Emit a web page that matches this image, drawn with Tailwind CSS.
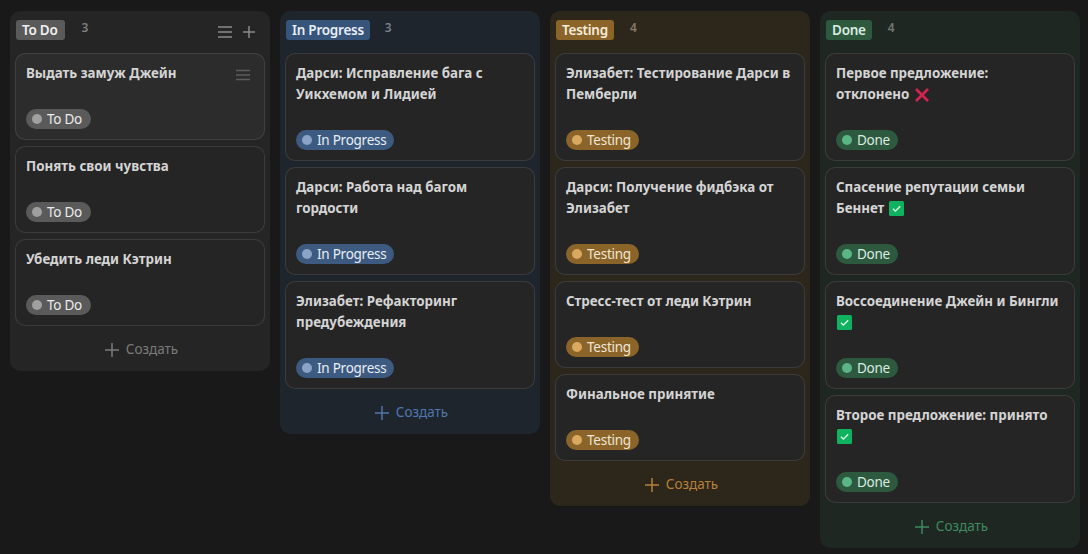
<!DOCTYPE html>
<html><head><meta charset="utf-8"><script src="https://cdn.jsdelivr.net/npm/@tailwindcss/browser@4"></script></head>
<body class="bg-[#191919] h-[554px] overflow-hidden font-['Noto_Sans','Open_Sans',sans-serif] text-[14px]">
<div class="flex items-start gap-[10px] pl-[10px] pt-[11px]">

<section class="w-[260px] rounded-[10px] bg-[#252525] px-[5px] pt-[9px]">
  <header class="flex items-start h-[33px]">
    <span class="ml-px h-5 pl-[6px] pr-[7px] rounded-[3px] bg-[#5a5a5a] text-[#f0f0f0] text-[13.5px] tracking-[-0.25px] leading-5 font-semibold">To Do</span>
    <span class="ml-[17px] -mt-[2px] text-[12px] font-semibold text-[#7f7f7f] leading-5">3</span>
    <svg class="ml-auto mt-[5px]" width="14" height="14" viewBox="0 0 14 14" fill="none" stroke="#8a8a8a" stroke-width="1.5"><path d="M0 2h14M0 7h14M0 12h14"/></svg>
    <svg class="ml-[11px] mt-[6px] mr-[10px]" width="12" height="12" viewBox="0 0 12 12" fill="none" stroke="#8a8a8a" stroke-width="1.5"><path d="M6 0v12M0 6h12"/></svg>
  </header>
  <div class="flex flex-col gap-[6px]">
    <article class="relative h-[87px] rounded-[10px] border border-white/10 bg-[#2c2c2c] px-[10px] pt-[9px]">
      <h3 class="font-bold text-[13.35px] leading-[21px] text-[#d4d4d4]">Выдать замуж Джейн</h3>
      <svg class="absolute right-[14px] top-[14px]" width="14" height="14" viewBox="0 0 14 14" fill="none" stroke="#5c5c5c" stroke-width="1.3"><path d="M0 2.5h14M0 7h14M0 11.5h14"/></svg>
      <span class="absolute left-[10px] bottom-[10px] flex items-center h-5 rounded-full bg-[#5a5a5a] pl-[6px] pr-[9px] text-[#ececec] text-[13.5px] tracking-[-0.25px] leading-5"><i class="w-[10px] h-[10px] rounded-full bg-[#a0a0a0] mr-[5px]"></i>To Do</span>
    </article>
    <article class="relative h-[87px] rounded-[10px] border border-white/10 bg-[#252525] px-[10px] pt-[9px]">
      <h3 class="font-bold text-[13.35px] leading-[21px] text-[#d4d4d4]">Понять свои чувства</h3>
      <span class="absolute left-[10px] bottom-[10px] flex items-center h-5 rounded-full bg-[#5a5a5a] pl-[6px] pr-[9px] text-[#ececec] text-[13.5px] tracking-[-0.25px] leading-5"><i class="w-[10px] h-[10px] rounded-full bg-[#a0a0a0] mr-[5px]"></i>To Do</span>
    </article>
    <article class="relative h-[87px] rounded-[10px] border border-white/10 bg-[#252525] px-[10px] pt-[9px]">
      <h3 class="font-bold text-[13.35px] leading-[21px] text-[#d4d4d4]">Убедить леди Кэтрин</h3>
      <span class="absolute left-[10px] bottom-[10px] flex items-center h-5 rounded-full bg-[#5a5a5a] pl-[6px] pr-[9px] text-[#ececec] text-[13.5px] tracking-[-0.25px] leading-5"><i class="w-[10px] h-[10px] rounded-full bg-[#a0a0a0] mr-[5px]"></i>To Do</span>
    </article>
  </div>
  <div class="flex items-center justify-center h-[45px] pl-[3px] pt-[2px] text-[#7b7b7b] text-[13.5px]">
    <svg class="mr-[7px]" width="14" height="14" viewBox="0 0 14 14" fill="none" stroke="currentColor" stroke-width="1.5"><path d="M7 0v14M0 7h14"/></svg>Создать
  </div>
</section>

<section class="w-[260px] rounded-[10px] bg-[#1e252d] px-[5px] pt-[9px]">
  <header class="flex items-start h-[33px]">
    <span class="ml-px h-5 px-[6px] rounded-[3px] bg-[#37547a] text-[#e8eef6] text-[13.5px] tracking-[-0.25px] leading-5 font-semibold">In Progress</span>
    <span class="ml-[15px] -mt-[2px] text-[12px] font-semibold text-[#7a7f86] leading-5">3</span>
  </header>
  <div class="flex flex-col gap-[6px]">
    <article class="relative h-[108px] rounded-[10px] border border-white/10 bg-[#252525] px-[10px] pt-[9px]">
      <h3 class="font-bold text-[13.35px] leading-[21px] text-[#d4d4d4]">Дарси: Исправление бага с Уикхемом и Лидией</h3>
      <span class="absolute left-[10px] bottom-[10px] flex items-center h-5 rounded-full bg-[#3d5a80] pl-[6px] pr-[8px] text-[#e8eef6] text-[13.5px] tracking-[-0.25px] leading-5"><i class="w-[10px] h-[10px] rounded-full bg-[#8aa3c7] mr-[5px]"></i>In Progress</span>
    </article>
    <article class="relative h-[108px] rounded-[10px] border border-white/10 bg-[#252525] px-[10px] pt-[9px]">
      <h3 class="font-bold text-[13.35px] leading-[21px] text-[#d4d4d4]">Дарси: Работа над багом гордости</h3>
      <span class="absolute left-[10px] bottom-[10px] flex items-center h-5 rounded-full bg-[#3d5a80] pl-[6px] pr-[8px] text-[#e8eef6] text-[13.5px] tracking-[-0.25px] leading-5"><i class="w-[10px] h-[10px] rounded-full bg-[#8aa3c7] mr-[5px]"></i>In Progress</span>
    </article>
    <article class="relative h-[108px] rounded-[10px] border border-white/10 bg-[#252525] px-[10px] pt-[9px]">
      <h3 class="font-bold text-[13.35px] leading-[21px] text-[#d4d4d4]">Элизабет: Рефакторинг предубеждения</h3>
      <span class="absolute left-[10px] bottom-[10px] flex items-center h-5 rounded-full bg-[#3d5a80] pl-[6px] pr-[8px] text-[#e8eef6] text-[13.5px] tracking-[-0.25px] leading-5"><i class="w-[10px] h-[10px] rounded-full bg-[#8aa3c7] mr-[5px]"></i>In Progress</span>
    </article>
  </div>
  <div class="flex items-center justify-center h-[45px] pl-[3px] pt-[2px] text-[#4f77ad] text-[13.5px]">
    <svg class="mr-[7px]" width="14" height="14" viewBox="0 0 14 14" fill="none" stroke="currentColor" stroke-width="1.5"><path d="M7 0v14M0 7h14"/></svg>Создать
  </div>
</section>

<section class="w-[260px] rounded-[10px] bg-[#2d261b] px-[5px] pt-[9px]">
  <header class="flex items-start h-[33px]">
    <span class="ml-px h-5 px-[6px] rounded-[3px] bg-[#8a6428] text-[#f5ecdc] text-[13.5px] tracking-[-0.25px] leading-5 font-semibold">Testing</span>
    <span class="ml-[16px] -mt-[2px] text-[12px] font-semibold text-[#85796a] leading-5">4</span>
  </header>
  <div class="flex flex-col gap-[6px]">
    <article class="relative h-[108px] rounded-[10px] border border-white/10 bg-[#252525] px-[10px] pt-[9px]">
      <h3 class="font-bold text-[13.35px] leading-[21px] text-[#d4d4d4]">Элизабет: Тестирование Дарси в Пемберли</h3>
      <span class="absolute left-[10px] bottom-[10px] flex items-center h-5 rounded-full bg-[#8a6428] pl-[6px] pr-[8px] text-[#f0e6d4] text-[13.5px] tracking-[-0.25px] leading-5"><i class="w-[10px] h-[10px] rounded-full bg-[#d9a95f] mr-[5px]"></i>Testing</span>
    </article>
    <article class="relative h-[108px] rounded-[10px] border border-white/10 bg-[#252525] px-[10px] pt-[9px]">
      <h3 class="font-bold text-[13.35px] leading-[21px] text-[#d4d4d4]">Дарси: Получение фидбэка от Элизабет</h3>
      <span class="absolute left-[10px] bottom-[10px] flex items-center h-5 rounded-full bg-[#8a6428] pl-[6px] pr-[8px] text-[#f0e6d4] text-[13.5px] tracking-[-0.25px] leading-5"><i class="w-[10px] h-[10px] rounded-full bg-[#d9a95f] mr-[5px]"></i>Testing</span>
    </article>
    <article class="relative h-[87px] rounded-[10px] border border-white/10 bg-[#252525] px-[10px] pt-[9px]">
      <h3 class="font-bold text-[13.35px] leading-[21px] text-[#d4d4d4]">Стресс-тест от леди Кэтрин</h3>
      <span class="absolute left-[10px] bottom-[10px] flex items-center h-5 rounded-full bg-[#8a6428] pl-[6px] pr-[8px] text-[#f0e6d4] text-[13.5px] tracking-[-0.25px] leading-5"><i class="w-[10px] h-[10px] rounded-full bg-[#d9a95f] mr-[5px]"></i>Testing</span>
    </article>
    <article class="relative h-[87px] rounded-[10px] border border-white/10 bg-[#252525] px-[10px] pt-[9px]">
      <h3 class="font-bold text-[13.35px] leading-[21px] text-[#d4d4d4]">Финальное принятие</h3>
      <span class="absolute left-[10px] bottom-[10px] flex items-center h-5 rounded-full bg-[#8a6428] pl-[6px] pr-[8px] text-[#f0e6d4] text-[13.5px] tracking-[-0.25px] leading-5"><i class="w-[10px] h-[10px] rounded-full bg-[#d9a95f] mr-[5px]"></i>Testing</span>
    </article>
  </div>
  <div class="flex items-center justify-center h-[45px] pl-[3px] pt-[2px] text-[#b5813a] text-[13.5px]">
    <svg class="mr-[7px]" width="14" height="14" viewBox="0 0 14 14" fill="none" stroke="currentColor" stroke-width="1.5"><path d="M7 0v14M0 7h14"/></svg>Создать
  </div>
</section>

<section class="w-[260px] rounded-[10px] bg-[#1e2722] px-[5px] pt-[9px]">
  <header class="flex items-start h-[33px]">
    <span class="ml-px h-5 px-[6px] rounded-[3px] bg-[#2d5a3f] text-[#dcebe2] text-[13.5px] tracking-[-0.25px] leading-5 font-semibold">Done</span>
    <span class="ml-[16px] -mt-[2px] text-[12px] font-semibold text-[#737a75] leading-5">4</span>
  </header>
  <div class="flex flex-col gap-[6px]">
    <article class="relative h-[108px] rounded-[10px] border border-white/10 bg-[#252525] px-[10px] pt-[9px]">
      <h3 class="font-bold text-[13.35px] leading-[21px] text-[#d4d4d4]">Первое предложение: отклонено <svg class="inline align-[-3px] ml-[2px]" width="14" height="14" viewBox="0 0 14 14" fill="none" stroke="#d9234f" stroke-width="2.6"><path d="M1 1l12 12M13 1L1 13"/></svg></h3>
      <span class="absolute left-[10px] bottom-[10px] flex items-center h-5 rounded-full bg-[#2d5a3f] pl-[6px] pr-[8px] text-[#dcebe2] text-[13.5px] tracking-[-0.25px] leading-5"><i class="w-[10px] h-[10px] rounded-full bg-[#5bb585] mr-[5px]"></i>Done</span>
    </article>
    <article class="relative h-[108px] rounded-[10px] border border-white/10 bg-[#252525] px-[10px] pt-[9px]">
      <h3 class="font-bold text-[13.35px] leading-[21px] text-[#d4d4d4]">Спасение репутации семьи Беннет <svg class="inline align-[-3px] ml-[1px]" width="15" height="15" viewBox="0 0 15 15"><rect width="15" height="15" rx="1.5" fill="#0fb35f"/><path d="M4 7.7l2.4 2.4 4.8-4.8" fill="none" stroke="#e6f5ec" stroke-width="1.3"/></svg></h3>
      <span class="absolute left-[10px] bottom-[10px] flex items-center h-5 rounded-full bg-[#2d5a3f] pl-[6px] pr-[8px] text-[#dcebe2] text-[13.5px] tracking-[-0.25px] leading-5"><i class="w-[10px] h-[10px] rounded-full bg-[#5bb585] mr-[5px]"></i>Done</span>
    </article>
    <article class="relative h-[108px] rounded-[10px] border border-white/10 bg-[#252525] px-[10px] pt-[9px]">
      <h3 class="font-bold text-[13.35px] leading-[21px] text-[#d4d4d4]">Воссоединение Джейн и Бингли <svg class="inline align-[-3px] ml-[1px]" width="15" height="15" viewBox="0 0 15 15"><rect width="15" height="15" rx="1.5" fill="#0fb35f"/><path d="M4 7.7l2.4 2.4 4.8-4.8" fill="none" stroke="#e6f5ec" stroke-width="1.3"/></svg></h3>
      <span class="absolute left-[10px] bottom-[10px] flex items-center h-5 rounded-full bg-[#2d5a3f] pl-[6px] pr-[8px] text-[#dcebe2] text-[13.5px] tracking-[-0.25px] leading-5"><i class="w-[10px] h-[10px] rounded-full bg-[#5bb585] mr-[5px]"></i>Done</span>
    </article>
    <article class="relative h-[108px] rounded-[10px] border border-white/10 bg-[#252525] px-[10px] pt-[9px]">
      <h3 class="font-bold text-[13.35px] leading-[21px] text-[#d4d4d4]">Второе предложение: принято <svg class="inline align-[-3px] ml-[1px]" width="15" height="15" viewBox="0 0 15 15"><rect width="15" height="15" rx="1.5" fill="#0fb35f"/><path d="M4 7.7l2.4 2.4 4.8-4.8" fill="none" stroke="#e6f5ec" stroke-width="1.3"/></svg></h3>
      <span class="absolute left-[10px] bottom-[10px] flex items-center h-5 rounded-full bg-[#2d5a3f] pl-[6px] pr-[8px] text-[#dcebe2] text-[13.5px] tracking-[-0.25px] leading-5"><i class="w-[10px] h-[10px] rounded-full bg-[#5bb585] mr-[5px]"></i>Done</span>
    </article>
  </div>
  <div class="flex items-center justify-center h-[45px] pl-[3px] pt-[2px] text-[#3f8a5f] text-[13.5px]">
    <svg class="mr-[7px]" width="14" height="14" viewBox="0 0 14 14" fill="none" stroke="currentColor" stroke-width="1.5"><path d="M7 0v14M0 7h14"/></svg>Создать
  </div>
</section>
</div>
</body></html>
